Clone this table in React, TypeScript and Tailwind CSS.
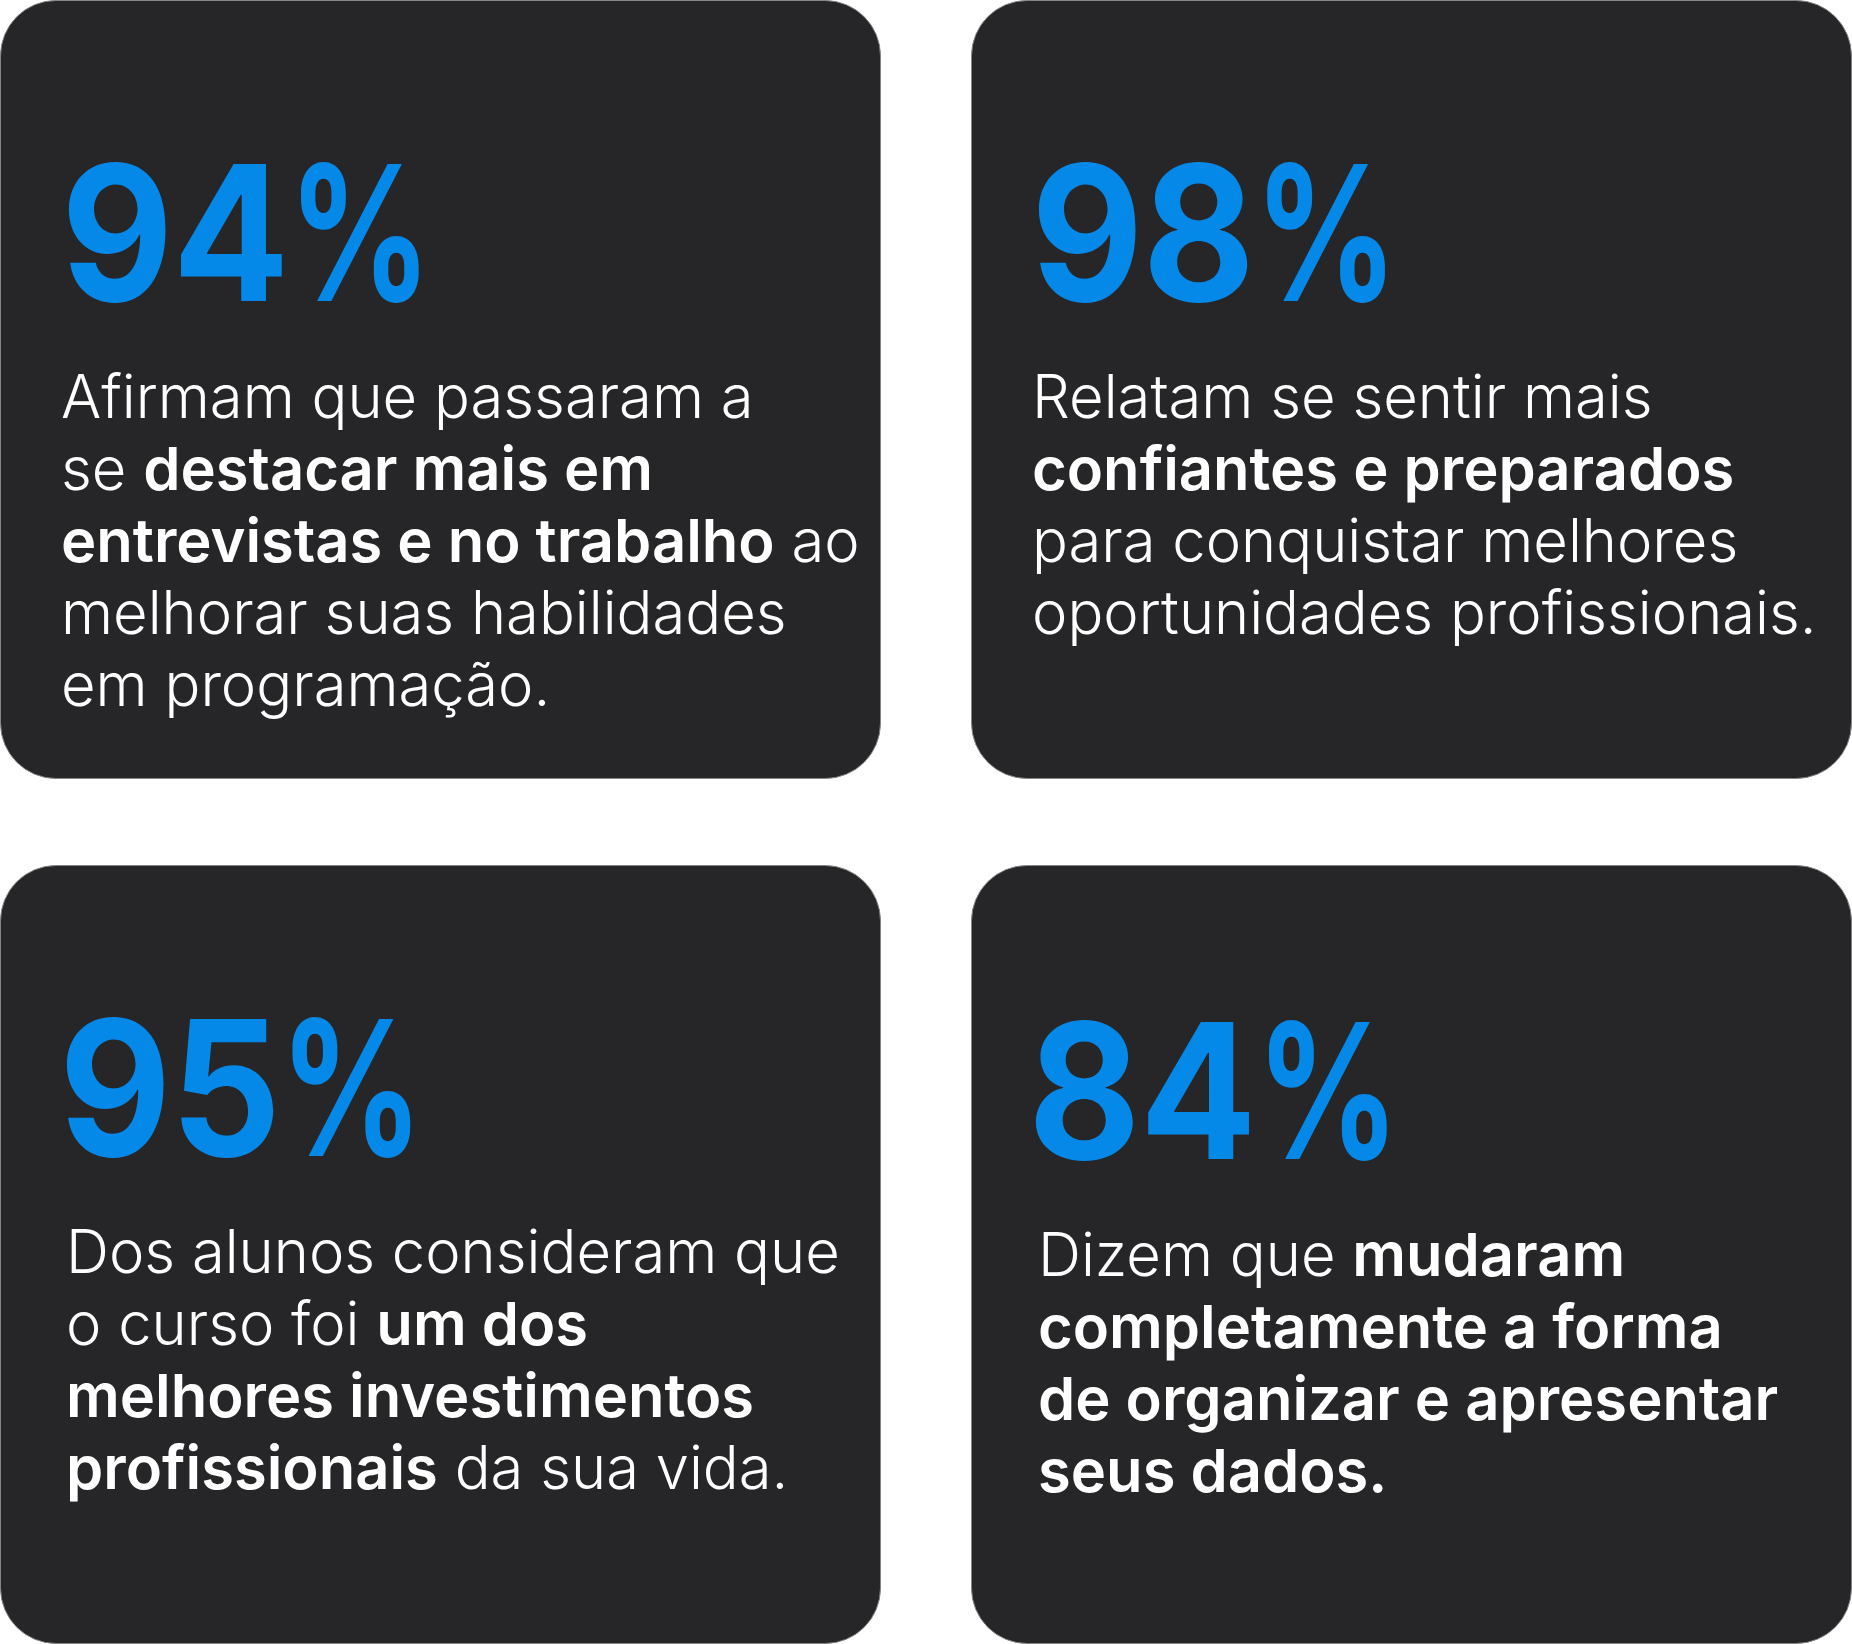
import React from "react";

type Card = {
  digits: string;
  numPad: string;
  textPad: string;
  topPad: string;
  lines: React.ReactNode[];
};

const B = ({ children }: { children: React.ReactNode }) => (
  <span className="font-semibold">{children}</span>
);

const cards: Card[] = [
  {
    digits: "94",
    numPad: "pl-[60px]",
    textPad: "pl-[60px]",
    topPad: "pt-[138px]",
    lines: [
      <>Afirmam que passaram a</>,
      <>
        se <B>destacar mais em</B>
      </>,
      <>
        <B>entrevistas e no trabalho</B> ao
      </>,
      <>melhorar suas habilidades</>,
      <>em programação.</>,
    ],
  },
  {
    digits: "98",
    numPad: "pl-[59px]",
    textPad: "pl-[60px]",
    topPad: "pt-[138px]",
    lines: [
      <>Relatam se sentir mais</>,
      <>
        <B>confiantes e preparados</B>
      </>,
      <>para conquistar melhores</>,
      <>oportunidades profissionais.</>,
    ],
  },
  {
    digits: "95",
    numPad: "pl-[58px]",
    textPad: "pl-[65px]",
    topPad: "pt-[128px]",
    lines: [
      <>Dos alunos consideram que</>,
      <>
        o curso foi <B>um dos</B>
      </>,
      <>
        <B>melhores investimentos</B>
      </>,
      <>
        <B>profissionais</B> da sua vida.
      </>,
    ],
  },
  {
    digits: "84",
    numPad: "pl-[56px]",
    textPad: "pl-[66px]",
    topPad: "pt-[131px]",
    lines: [
      <>
        Dizem que <B>mudaram</B>
      </>,
      <>
        <B>completamente a forma</B>
      </>,
      <>
        <B>de organizar e apresentar</B>
      </>,
      <>
        <B>seus dados.</B>
      </>,
    ],
  },
];

export default function App() {
  return (
    <div className="w-[1852px] min-h-[1644px] bg-white font-['Inter',sans-serif]">
      <div className="grid grid-cols-2 gap-x-[90px] gap-y-[86px]">
        {cards.map((c, i) => (
          <div
            key={i}
            className={`h-[779px] rounded-[56px] border border-[#858585] bg-[#262628] ${c.topPad}`}
          >
            <div
              className={`${c.numPad} text-[188px] leading-none font-bold tracking-[-0.005em] text-[#0589e9] whitespace-nowrap`}
            >
              <span className="inline-block origin-left scale-x-[0.92]">
                {c.digits}
                <span className="inline-block origin-left scale-x-[0.815]">%</span>
              </span>
            </div>
            <div
              className={`${c.textPad} mt-[33px] text-[59.7px] leading-[72px] font-light text-white whitespace-nowrap`}
            >
              {c.lines.map((l, j) => (
                <div key={j}>{l}</div>
              ))}
            </div>
          </div>
        ))}
      </div>
    </div>
  );
}
